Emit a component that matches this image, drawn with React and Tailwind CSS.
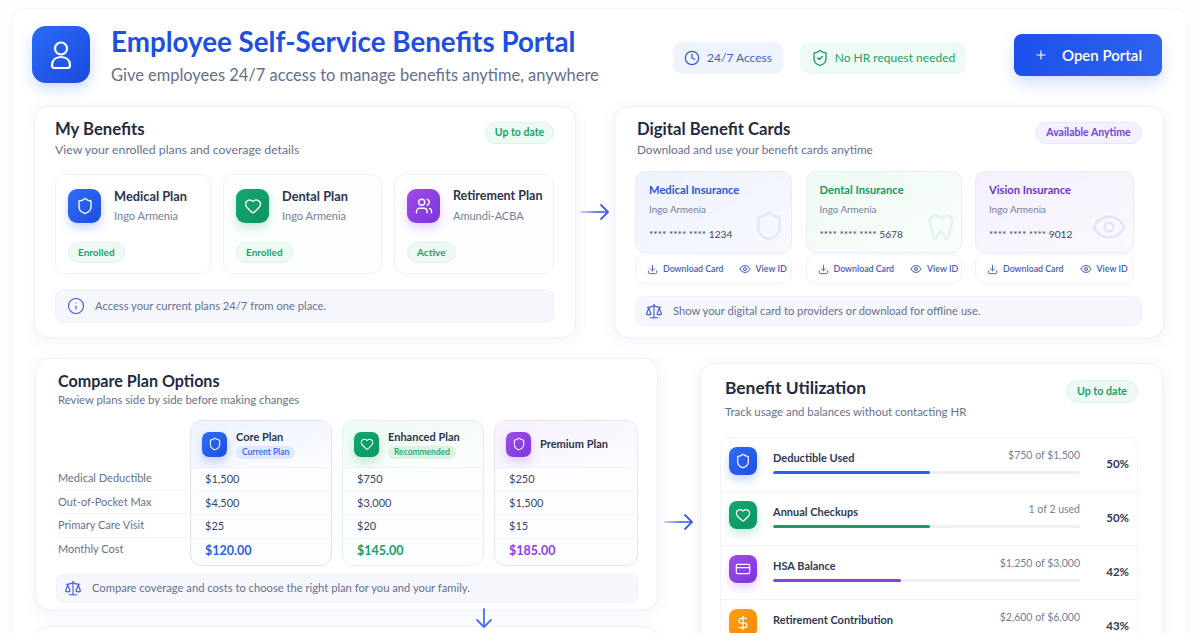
import { Clock, CreditCard, DollarSign, Download, Eye, Heart, Info, Plus, Scale, Shield, ShieldCheck, Users } from "lucide-react"

const panel = "bg-white border border-[#eef0fa] rounded-[14px] shadow-[0_3px_14px_rgba(90,100,210,0.09)]"

const iconColors = {
  blue: "bg-linear-to-br from-[#2f6df6] to-[#1d4fe0] shadow-[0_5px_10px_rgba(37,99,235,0.25)]",
  green: "bg-linear-to-br from-[#12a96f] to-[#0d9463] shadow-[0_5px_10px_rgba(16,160,110,0.22)]",
  purple: "bg-linear-to-br from-[#a04bea] to-[#7c35dc] shadow-[0_5px_10px_rgba(130,60,230,0.22)]",
  orange: "bg-linear-to-br from-[#fb9f14] to-[#f58a07] shadow-[0_5px_10px_rgba(245,140,10,0.22)]",
}

function ToothIcon({ className }) {
  return (
    <svg viewBox="0 0 24 24" fill="none" stroke="currentColor" strokeWidth="1.6" strokeLinecap="round" strokeLinejoin="round" className={className}>
      <path d="M12 5.500C10 4 8.500 3.200 6.700 3.600 4.300 4.100 3.200 6.300 3.600 9c.3 2 1.300 3.400 1.600 5.500.3 2.300.6 6.500 2.500 6.500 2 0 1.500-5.500 4.300-5.500s2.300 5.500 4.300 5.500c1.900 0 2.200-4.200 2.500-6.500.3-2.100 1.300-3.500 1.600-5.500.4-2.700-.7-4.900-3.100-5.400C15.500 3.200 14 4 12 5.500z" />
    </svg>
  )
}

function UserIcon({ className }) {
  return (
    <svg viewBox="0 0 32 32" fill="none" stroke="currentColor" strokeWidth="2.2" strokeLinejoin="round" className={className}>
      <circle cx="16" cy="9.500" r="6" />
      <path d="M9.500 29h13c1.500 0 2.500-1 2.500-2.500 0-5-3.500-8.500-9-8.500s-9 3.500-9 8.500C7 28 8 29 9.500 29z" />
    </svg>
  )
}

// long flow arrow that fades out towards its tail
function FlowArrow({ id }) {
  return (
    <svg viewBox="0 0 30 18" fill="none" className="w-[30px] h-[18px]">
      <defs>
        <linearGradient id={id} x1="0" x2="1" y1="0" y2="0">
          <stop offset="0" stopColor="#4a6ee8" stopOpacity="0.35" />
          <stop offset="0.6" stopColor="#3f5fe6" />
        </linearGradient>
      </defs>
      <rect x="0" y="8.200" width="28" height="1.600" fill={`url(#${id})`} />
      <path d="M21 2l7 7-7 7" stroke="#3f5fe6" strokeWidth="1.800" strokeLinecap="round" strokeLinejoin="round" />
    </svg>
  )
}

function DownArrow() {
  return (
    <svg viewBox="0 0 18 21" fill="none" stroke="#4f6ee6" strokeWidth="1.800" strokeLinecap="round" strokeLinejoin="round" className="w-[18px] h-[21px] shrink-0">
      <path d="M9 1v18M2 12l7 7 7-7" />
    </svg>
  )
}

function Badge({ text, tone = "green", className = "" }) {
  const tones = {
    green: "bg-[#edf9f3] border-[#dff3e9] text-[#1e9e68]",
    purple: "bg-[#f5f0fe] border-[#ebe3fb] text-[#7a3fdc]",
  }
  return (
    <span className={`inline-flex items-center justify-center rounded-full border font-bold ${tones[tone]} ${className}`}>
      {text}
    </span>
  )
}

function PanelHead({ title, sub, titleClass, subClass }) {
  return (
    <div>
      <h2 className={`leading-[24px] font-bold text-[#1f2a44] ${titleClass}`}>{title}</h2>
      <p className={`leading-[16px] text-[#667092] ${subClass}`}>{sub}</p>
    </div>
  )
}

function InfoBar({ icon: Icon, text, className }) {
  return (
    <div className={`flex items-center bg-[#f6f7fd] border border-[#f0f2fb] rounded-[8px] text-[11.200px] text-[#667092] ${className}`}>
      <Icon className="w-[18px] h-[18px] text-[#3f5bd8] shrink-0" strokeWidth={1.5} />
      <span>{text}</span>
    </div>
  )
}

function PlanCard({ icon: Icon, color, title, org, status, width, tint, titleSize }) {
  return (
    <div className={`${width} ${tint} h-[100px] border border-[#eef1f8] rounded-[11px] pt-[14px] pl-[12px]`}>
      <div className="flex">
        <div className={`${iconColors[color]} w-[33px] h-[34px] rounded-[9px] flex items-center justify-center text-white`}>
          <Icon className="w-[18px] h-[18px]" strokeWidth={1.8} />
        </div>
        <div className="ml-[13px]">
          <div className={`${titleSize} leading-[16px] mt-[-1px] font-bold text-[#2a3450] whitespace-nowrap`}>{title}</div>
          <div className="text-[11px] leading-[14px] mt-[5px] text-[#76809c]">{org}</div>
        </div>
      </div>
      <Badge text={status} className="h-[21px] px-[9px] mt-[19px] text-[10px]" />
    </div>
  )
}

function BenefitCard({ title, number, color, bg, mark: Mark, markColor, markClass, width, gap }) {
  return (
    <div className={width}>
      <div className={`${bg} relative h-[82px] border border-[#e8ebf8] rounded-[10px] pt-[11px] pl-[13px]`}>
        <div className={`text-[11.200px] leading-[14px] font-bold ${color}`}>{title}</div>
        <div className="text-[9.800px] leading-[12px] mt-[6px] text-[#76809c]">Ingo Armenia</div>
        <div className="text-[10.200px] leading-[12px] mt-[13px] text-[#3d4662] whitespace-nowrap">{number}</div>
        <Mark className={`absolute ${markClass} ${markColor}`} strokeWidth={1.5} />
      </div>
      <div className={`h-[30px] mt-px bg-white border border-[#f0f2fa] rounded-[9px] flex items-center pl-[11px] text-[8.800px] font-semibold text-[#3f5bc8] ${gap}`}>
        <span className="flex items-center gap-[5px] whitespace-nowrap">
          <Download className="w-[11px] h-[11px]" />
          Download Card
        </span>
        <span className="flex items-center gap-[5px] whitespace-nowrap">
          <Eye className="w-[12px] h-[12px]" />
          View ID
        </span>
      </div>
    </div>
  )
}

const compareLabels = ["Medical Deductible", "Out-of-Pocket Max", "Primary Care Visit", "Monthly Cost"]

const comparePlans = [
  { name: "Core Plan", tag: "Current Plan", tagClass: "bg-[#dfe8fd] text-[#3264e6]", icon: Shield, color: "blue", vals: ["$1,500", "$4,500", "$25", "$120.00"], cost: "text-[#2563eb]", width: "w-[142px]", head: "from-[#eef3fe] to-[#fbfcff]", border: "border-[#dfe5f8]" },
  { name: "Enhanced Plan", tag: "Recommended", tagClass: "bg-[#d9f3e6] text-[#1f9e69]", icon: Heart, color: "green", vals: ["$750", "$3,000", "$20", "$145.00"], cost: "text-[#12a064]", width: "w-[142px]", head: "from-[#eefaf4] to-[#fbfefc]", border: "border-[#e2f2ea]" },
  { name: "Premium Plan", icon: Shield, color: "purple", vals: ["$250", "$1,500", "$15", "$185.00"], cost: "text-[#8b3fe6]", width: "w-[144px]", head: "from-[#f6f1fe] to-[#fdfbff]", border: "border-[#e9e5f8]" },
]

function ComparePlan({ plan }) {
  const Icon = plan.icon
  return (
    <div className={`${plan.width} ${plan.border} bg-[#fcfdff] border rounded-[11px] overflow-hidden`}>
      <div className={`h-[47px] bg-linear-to-br ${plan.head} flex items-center pl-[11px] border-b border-[#f1f3fb]`}>
        <div className={`${iconColors[plan.color]} w-[25px] h-[25px] rounded-[7px] flex items-center justify-center text-white shrink-0`}>
          <Icon className="w-[14px] h-[14px]" strokeWidth={1.8} />
        </div>
        <div className="ml-[9px]">
          <div className="text-[11px] leading-[14px] font-bold text-[#2a3450] whitespace-nowrap">{plan.name}</div>
          {plan.tag && (
            <div className={`${plan.tagClass} mt-[2px] w-fit h-[13px] rounded-full px-[6px] text-[8.500px] leading-[13px] font-semibold`}>{plan.tag}</div>
          )}
        </div>
      </div>
      {plan.vals.map((v, i) =>
        i === 3 ? (
          <div key={v} className={`h-[26px] pl-[14px] flex items-center text-[12.500px] font-bold ${plan.cost}`}>{v}</div>
        ) : (
          <div key={v} className="h-[23.500px] pl-[14px] flex items-center text-[11px] text-[#3d4662] border-b border-[#f1f3fb]">{v}</div>
        ),
      )}
    </div>
  )
}

const usage = [
  { label: "Deductible Used", detail: "$750 of $1,500", pct: 50, fill: 51, bar: "bg-[#2563eb]", icon: Shield, color: "blue" },
  { label: "Annual Checkups", detail: "1 of 2 used", pct: 50, fill: 51, bar: "bg-[#12a064]", icon: Heart, color: "green" },
  { label: "HSA Balance", detail: "$1,250 of $3,000", pct: 42, fill: 41.7, bar: "bg-[#8a3fe0]", icon: CreditCard, color: "purple" },
  { label: "Retirement Contribution", detail: "$2,600 of $6,000", pct: 43, fill: 43, bar: "bg-[#f59307]", icon: DollarSign, color: "orange" },
]

function UsageRow({ item, last }) {
  const Icon = item.icon
  return (
    <div className={`h-[54px] flex items-start pt-[9px] pl-[8px] pr-[8px] ${last ? "" : "border-b border-[#f1f3fa]"}`}>
      <div className={`${iconColors[item.color]} w-[28px] h-[28px] rounded-[8px] flex items-center justify-center text-white shrink-0`}>
        <Icon className="w-[16px] h-[16px]" strokeWidth={1.8} />
      </div>
      <div className="w-[307px] ml-[16px]">
        <div className="flex justify-between items-center h-[16px] mt-[3px]">
          <span className="text-[11px] font-bold text-[#2f3955]">{item.label}</span>
          <span className="text-[10.500px] text-[#76809c] mt-[-5px]">{item.detail}</span>
        </div>
        <div className="h-[3px] mt-[5px] rounded-full bg-[#eef0f7] overflow-hidden">
          <div className={`h-full rounded-full ${item.bar}`} style={{ width: `${item.fill}%` }} />
        </div>
      </div>
      <span className="ml-auto mt-[8px] text-[11.500px] font-bold text-[#2f3955]">{item.pct}%</span>
    </div>
  )
}

export default function App() {
  return (
    <div className="h-[633px] overflow-hidden bg-[#fdfdfe] pt-[8px] pl-[11px] font-['Lato','Carlito','Liberation_Sans',sans-serif]">
      <div className="w-[1177px] h-[700px] bg-white border border-[#f4f5f9] rounded-[16px] pl-[20px]">
        {/* header */}
        <div className="flex items-start pt-[17px] h-[97px]">
          <div className="w-[58px] h-[57px] rounded-[14px] bg-linear-to-br from-[#2b6cf6] to-[#1c48de] shadow-[0_6px_14px_rgba(37,99,235,0.22)] flex items-center justify-center text-white">
            <UserIcon className="w-[32px] h-[32px]" />
          </div>
          <div className="ml-[21px] w-[562px]">
            <h1 className="text-[27.750px] leading-[34px] -mt-px font-bold text-[#1d4fe3] whitespace-nowrap">Employee Self-Service Benefits Portal</h1>
            <p className="text-[16.450px] leading-[20px] mt-[6px] text-[#636e90] whitespace-nowrap">Give employees 24/7 access to manage benefits anytime, anywhere</p>
          </div>
          <div className="flex items-center gap-[17px] mt-[16px]">
            <div className="h-[32px] w-[110px] rounded-[9px] bg-[#eff3fc] flex items-center justify-center gap-[7px] text-[12px] text-[#3f62c8]">
              <Clock className="w-[16px] h-[16px] text-[#2f5bd8]" strokeWidth={1.8} />
              24/7 Access
            </div>
            <div className="h-[32px] w-[166px] rounded-[9px] bg-[#eefaf4] flex items-center justify-center gap-[6px] text-[12px] text-[#1e9e68]">
              <ShieldCheck className="w-[18px] h-[18px]" strokeWidth={1.8} />
              No HR request needed
            </div>
          </div>
          <button className="ml-[48px] mt-[8px] w-[148px] h-[42px] rounded-[8px] bg-linear-to-r from-[#1d50ea] to-[#2d63ee] shadow-[0_8px_16px_rgba(37,99,235,0.2)] flex items-center justify-center gap-[14px] text-white text-[15px] font-semibold">
            <Plus className="w-[14px] h-[14px]" />
            Open Portal
          </button>
        </div>

        {/* first row */}
        <div className="flex items-center ml-[2px]">
          <section className={`${panel} w-[542px] h-[232px] pt-[10px] pl-[20px] pr-[21px]`}>
            <div className="flex justify-between items-start">
              <PanelHead title="My Benefits" sub="View your enrolled plans and coverage details" titleClass="text-[16.700px]" subClass="text-[12.250px] mt-px" />
              <Badge text="Up to date" className="w-[69px] h-[22px] mt-[5px] text-[10.500px]" />
            </div>
            <div className="flex justify-between mt-[16px]">
              <PlanCard icon={Shield} color="blue" title="Medical Plan" org="Ingo Armenia" status="Enrolled" width="w-[156px]" tint="bg-white" titleSize="text-[12.800px]" />
              <PlanCard icon={Heart} color="green" title="Dental Plan" org="Ingo Armenia" status="Enrolled" width="w-[159px]" tint="bg-[#fbfefd]" titleSize="text-[12.800px]" />
              <PlanCard icon={Users} color="purple" title="Retirement Plan" org="Amundi-ACBA" status="Active" width="w-[160px]" tint="bg-[#fefdff]" titleSize="text-[12.500px]" />
            </div>
            <InfoBar icon={Info} text="Access your current plans 24/7 from one place." className="h-[34px] mt-[15px] pl-[11px] gap-[10px]" />
          </section>
          <div className="w-[38px] flex justify-center pb-[21px]">
            <FlowArrow id="flowTop" />
          </div>
          <section className={`${panel} w-[550px] h-[232px] pt-[10px] pl-[22px] pr-[21px]`}>
            <div className="flex justify-between items-start">
              <PanelHead title="Digital Benefit Cards" sub="Download and use your benefit cards anytime" titleClass="text-[16.700px]" subClass="text-[11.750px] mt-px" />
              <Badge text="Available Anytime" tone="purple" className="w-[107px] h-[22px] mt-[5px] text-[10.500px]" />
            </div>
            <div className="flex -ml-[2px] mt-[13px] w-[499px] justify-between">
              <BenefitCard title="Medical Insurance" number="**** **** **** 1234" color="text-[#2b54d6]" bg="bg-linear-to-br from-[#eef2fd] to-[#f7f9fe]" mark={Shield} markColor="text-[#dfe5f6]" markClass="w-[32px] h-[36px] right-[6px] top-[36px]" width="w-[157px]" gap="gap-[15px]" />
              <BenefitCard title="Dental Insurance" number="**** **** **** 5678" color="text-[#159a63]" bg="bg-linear-to-br from-[#eefaf4] to-[#fafefc]" mark={ToothIcon} markColor="text-[#e0f2e9]" markClass="w-[32px] h-[36px] right-[4px] top-[37px]" width="w-[156px]" gap="gap-[16px]" />
              <BenefitCard title="Vision Insurance" number="**** **** **** 9012" color="text-[#6c35c9]" bg="bg-linear-to-br from-[#f4f0fd] to-[#fbf9ff]" mark={Eye} markColor="text-[#e5e0f7]" markClass="w-[36px] h-[36px] right-[6px] top-[37px]" width="w-[159px]" gap="gap-[16px]" />
            </div>
            <InfoBar icon={Scale} text="Show your digital card to providers or download for offline use." className="h-[30px] mt-[12px] -ml-[2px] w-[507px] pl-[9px] gap-[10px]" />
          </section>
        </div>

        {/* second row */}
        <div className="flex items-start mt-[20px] ml-[3px]">
          <div className="w-[623px]">
            <section className={`${panel} h-[252px] pt-[10px] pl-[22px] pr-[19px]`}>
              <PanelHead title="Compare Plan Options" sub="Review plans side by side before making changes" titleClass="text-[16.100px]" subClass="text-[11.300px] -mt-px" />
              <div className="flex mt-[12px]">
                <div className="w-[132px] pt-[47px]">
                  {compareLabels.map((l, i) => (
                    <div key={l} className={`h-[23.500px] flex items-center text-[11px] text-[#667092] ${i < 3 ? "border-b border-[#f3f4fb]" : ""}`}>{l}</div>
                  ))}
                </div>
                <div className="flex gap-[10px]">
                  {comparePlans.map((p) => (
                    <ComparePlan key={p.name} plan={p} />
                  ))}
                </div>
              </div>
              <InfoBar icon={Scale} text="Compare coverage and costs to choose the right plan for you and your family." className="h-[29px] mt-[8px] -ml-[2px] w-[582px] pl-[7px] gap-[10px]" />
            </section>
            <div className="h-[16px] flex justify-center pl-[274px]">
              <div className="-mt-[2px]">
                <DownArrow />
              </div>
            </div>
            <section className={`${panel} h-[60px]`} />
          </div>
          <div className="w-[42px] flex justify-center mt-[155px]">
            <FlowArrow id="flowBottom" />
          </div>
          <section className={`${panel} w-[463px] h-[300px] mt-[5px] pt-[12px] pl-[24px] pr-[24px]`}>
            <div className="flex justify-between items-start">
              <PanelHead title="Benefit Utilization" sub="Track usage and balances without contacting HR" titleClass="text-[17.400px]" subClass="text-[11.400px] mt-[4px]" />
              <Badge text="Up to date" className="w-[72px] h-[23px] mt-[4px] text-[10.700px]" />
            </div>
            <div className="-ml-[5px] mt-[17px] border border-[#f3f4fb] rounded-[10px]">
              {usage.map((u, i) => (
                <UsageRow key={u.label} item={u} last={i === usage.length - 1} />
              ))}
            </div>
          </section>
        </div>
      </div>
    </div>
  )
}
